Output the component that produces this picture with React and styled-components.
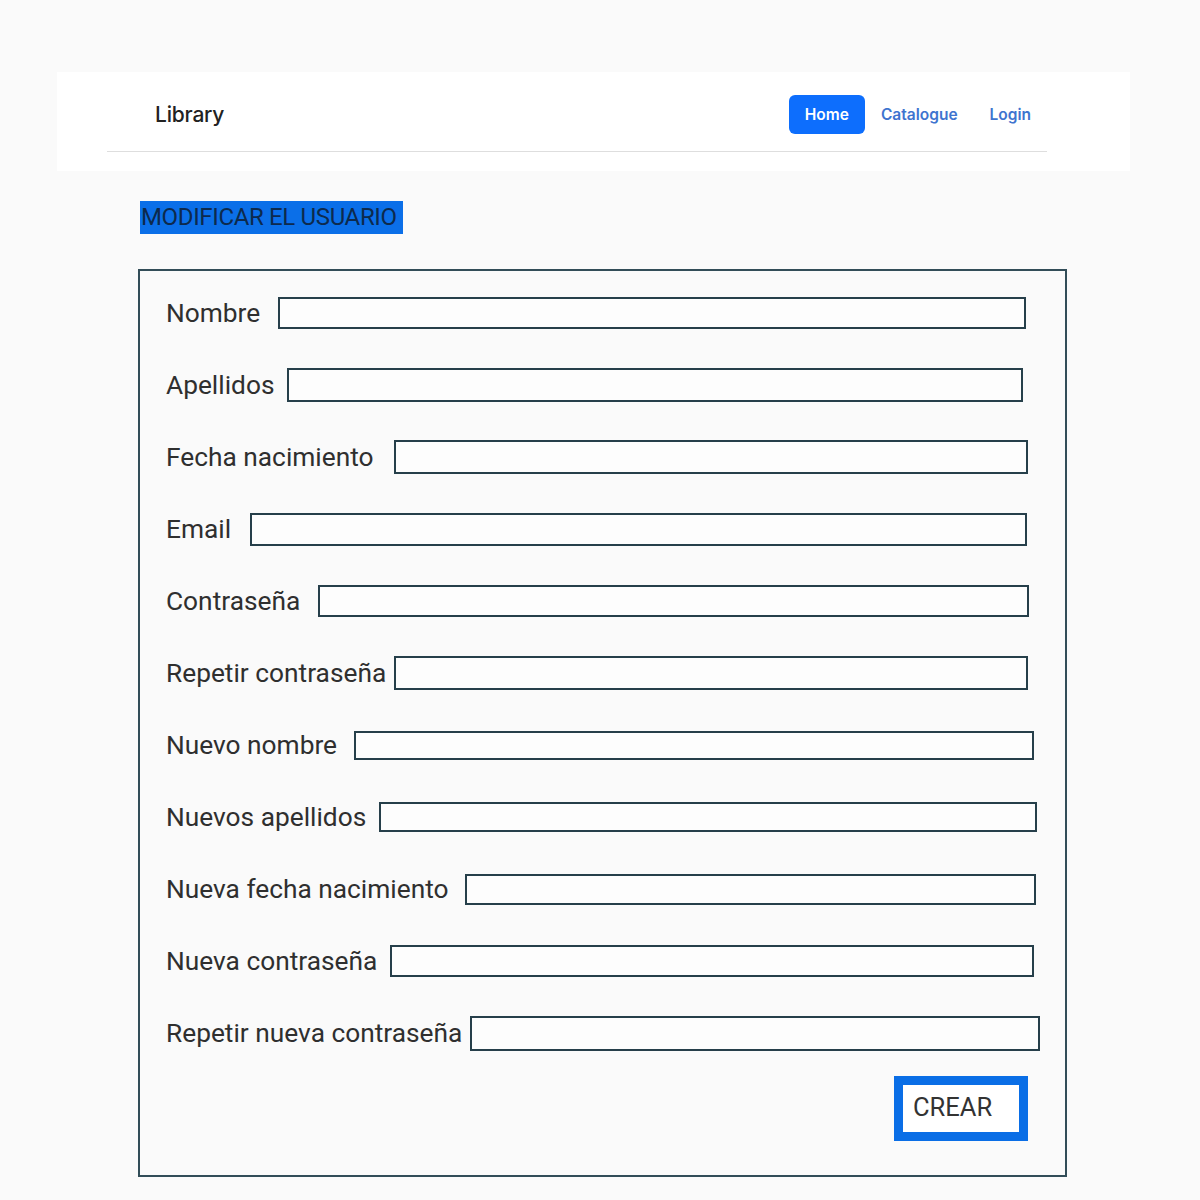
import React from "react";
import styled, { createGlobalStyle } from "styled-components";

const Global = createGlobalStyle`
  html, body { margin: 0; padding: 0; background: #fafafa; }
  body { font-family: Roboto, "Liberation Sans", sans-serif; }
`;

const Page = styled.div`
  width: 1200px;
  min-height: 1200px;
  padding-top: 72px;
  box-sizing: border-box;
`;

const NavShell = styled.header`
  margin-left: 57px;
  width: 1073px;
  height: 99px;
  background: #ffffff;
  padding: 0 83px 0 50px;
  box-sizing: border-box;
`;

const NavBar = styled.nav`
  height: 80px;
  border-bottom: 1px solid #dedede;
  display: flex;
  align-items: center;
  justify-content: space-between;
  padding: 6px 0 0 48px;
  box-sizing: border-box;
`;

const Brand = styled.span`
  font-family: Inter, Roboto, sans-serif;
  font-size: 21px;
  font-weight: 500;
  color: #222;
  letter-spacing: -0.2px;
`;

const Links = styled.div`
  display: flex;
  align-items: center;
`;

const NavLink = styled.a`
  font-family: Inter, "Noto Sans", sans-serif;
  font-size: 15.5px;
  font-weight: 600;
  text-decoration: none;
  border-radius: 6px;
  height: 39px;
  display: flex;
  align-items: center;
  padding: 0 16px;
  color: ${(p) => (p.$active ? "#ffffff" : "#3e74cf")};
  background: ${(p) => (p.$active ? "#0d6efd" : "transparent")};
`;

const Main = styled.main`
  padding: 30px 0 0 138px;
`;

const Heading = styled.h1`
  display: inline-block;
  margin: 0 0 0 2px;
  background: #0b6fe8;
  color: #0d2a4d;
  font-family: Roboto, sans-serif;
  font-weight: 400;
  font-size: 24px;
  line-height: 33px;
  height: 33px;
  padding: 0 6px 0 1px;
  letter-spacing: -0.35px;
`;

const Form = styled.form`
  margin-top: 35px;
  width: 929px;
  border: 2px solid #324d58;
  box-sizing: border-box;
  padding: 25px 0 34px 26px;
  display: flex;
  flex-direction: column;
  gap: 38px;
`;

const Row = styled.div`
  display: flex;
  align-items: center;
  height: 34px;
`;

const Label = styled.label`
  font-family: Roboto, sans-serif;
  font-size: 26.3px;
  color: #2f2f2f;
  white-space: nowrap;
`;

const Input = styled.input`
  flex: 1;
  height: ${(p) => p.$h}px;
  box-sizing: border-box;
  border: 2px solid #263f4a;
  background: #fdfdfd;
  margin-left: ${(p) => p.$gap}px;
  margin-right: ${(p) => p.$end}px;
  outline: none;
  border-radius: 0;
  padding: 0;
`;

const Actions = styled.div`
  display: flex;
  justify-content: flex-end;
  margin-top: -12px;
  padding-right: 37px;
`;

const Submit = styled.button`
  width: 134px;
  height: 65px;
  box-sizing: border-box;
  border: 9px solid #0a6ee6;
  background: #ffffff;
  font-family: Roboto, sans-serif;
  font-size: 25.5px;
  color: #333;
  text-align: left;
  padding: 0 0 4px 10px;
  border-radius: 0;
`;

const rows = [
  { label: "Nombre", gap: 18, end: 39, h: 32 },
  { label: "Apellidos", gap: 13, end: 42, h: 34 },
  { label: "Fecha nacimiento", gap: 20, end: 37, h: 34 },
  { label: "Email", gap: 19, end: 38, h: 33 },
  { label: "Contraseña", gap: 18, end: 36, h: 32 },
  { label: "Repetir contraseña", gap: 8, end: 37, h: 34 },
  { label: "Nuevo nombre", gap: 17, end: 31, h: 29 },
  { label: "Nuevos apellidos", gap: 13, end: 28, h: 30 },
  { label: "Nueva fecha nacimiento", gap: 16, end: 29, h: 31 },
  { label: "Nueva contraseña", gap: 13, end: 31, h: 32 },
  { label: "Repetir nueva contraseña", gap: 8, end: 25, h: 35 },
];

export default function App() {
  return (
    <>
      <Global />
      <Page>
        <NavShell>
          <NavBar>
            <Brand>Library</Brand>
            <Links>
              <NavLink href="#" $active>Home</NavLink>
              <NavLink href="#">Catalogue</NavLink>
              <NavLink href="#">Login</NavLink>
            </Links>
          </NavBar>
        </NavShell>
        <Main>
          <Heading>MODIFICAR EL USUARIO</Heading>
          <Form onSubmit={(e) => e.preventDefault()}>
            {rows.map((r) => (
              <Row key={r.label}>
                <Label>{r.label}</Label>
                <Input $gap={r.gap} $end={r.end} $h={r.h} />
              </Row>
            ))}
            <Actions>
              <Submit type="submit">CREAR</Submit>
            </Actions>
          </Form>
        </Main>
      </Page>
    </>
  );
}
